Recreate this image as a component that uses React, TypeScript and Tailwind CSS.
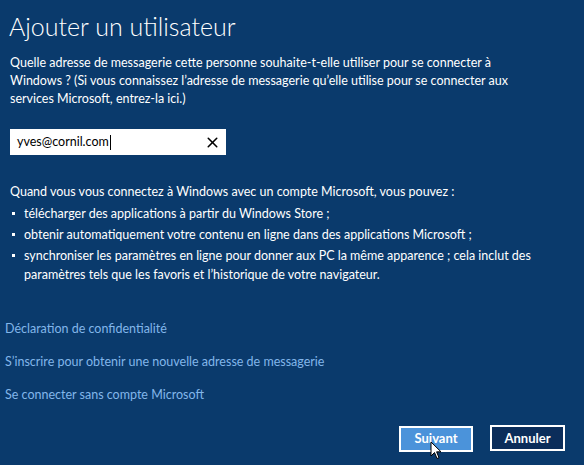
import { X } from 'lucide-react';

const bullets = [
  'télécharger des applications à partir du Windows Store ;',
  'obtenir automatiquement votre contenu en ligne dans des applications Microsoft ;',
  'synchroniser les paramètres en ligne pour donner aux PC la même apparence ; cela inclut des paramètres tels que les favoris et l’historique de votre navigateur.',
];

const links = [
  'Déclaration de confidentialité',
  'S’inscrire pour obtenir une nouvelle adresse de messagerie',
  'Se connecter sans compte Microsoft',
];

export default function App() {
  return (
    <div
      className="w-[584px] h-[465px] bg-[#0a3a6c] text-white overflow-hidden flex flex-col"
      style={{ fontFamily: 'Lato, "Open Sans", sans-serif' }}
    >
      <h1 className="pl-[9px] pt-[10px] text-[25px] leading-[32px] font-light">Ajouter un utilisateur</h1>

      <p className="pl-[10px] pr-[50px] mt-[12px] text-[12.5px] leading-[18px]">
        Quelle adresse de messagerie cette personne souhaite-t-elle utiliser pour se connecter à Windows ? (Si vous
        connaissez l’adresse de messagerie qu’elle utilise pour se connecter aux services Microsoft, entrez-la ici.)
      </p>

      <div className="ml-[10px] mt-[21px] w-[216px] h-[26px] bg-white flex items-center justify-between pl-[7px] pr-[5px]">
        <span className="text-[12.5px] text-black flex items-center">
          yves@cornil.com<span className="w-px h-[15px] bg-black ml-px" />
        </span>
        <X size={17} strokeWidth={2.2} className="text-black" />
      </div>

      <p className="pl-[10px] mt-[28px] text-[12.5px] leading-[18px]">
        Quand vous vous connectez à Windows avec un compte Microsoft, vous pouvez :
      </p>
      <ul className="pl-[10px] pr-[40px] mt-[3px] flex flex-col gap-[2px] text-[12.5px] leading-[19px]">
        {bullets.map((b) => (
          <li key={b} className="flex">
            <span className="w-[14px] shrink-0 flex justify-start pt-[8px]">
              <span className="w-[3px] h-[3px] bg-white ml-[2px]" />
            </span>
            <span>{b}</span>
          </li>
        ))}
      </ul>

      <div className="pl-[5px] mt-[36px] flex flex-col gap-[15px] text-[12.5px] leading-[18px] text-[#82b6ea]">
        {links.map((l) => (
          <span key={l}>{l}</span>
        ))}
      </div>

      <div className="mt-auto mb-[13px] flex justify-end gap-[17px] pr-[19px]">
        <div className="relative">
          <button className="w-[74px] h-[26px] border-2 border-white bg-[#4b93da] text-[13px] font-bold">
            Suivant
          </button>
          <svg className="absolute left-[31px] top-[16px]" width="12" height="19" viewBox="0 0 12 19">
            <path d="M1 1 L1 15 L4.5 11.5 L7 17.5 L9 16.7 L6.6 10.8 L11 10.8 Z" fill="white" stroke="black" strokeWidth="1" />
          </svg>
        </div>
        <button className="w-[75px] h-[26px] border-2 border-white bg-[#0b2d5a] text-[13px] font-bold">
          Annuler
        </button>
      </div>
    </div>
  );
}
